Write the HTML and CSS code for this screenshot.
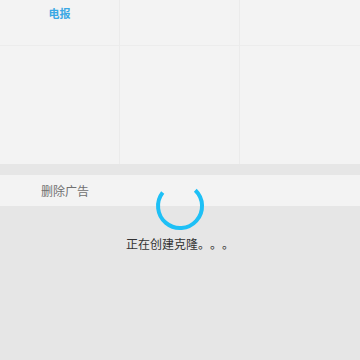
FILE: index.html
```html
<!DOCTYPE html>
<html lang="zh-CN">
  <head>
    <meta charset="UTF-8" />
    <meta name="viewport" content="width=device-width, initial-scale=1.0" />
    <title>克隆</title>
    <link rel="stylesheet" href="styles.css">
  </head>
  <body>
    <div class="page">
      <div class="grid">
        <div class="cell">
          <span class="label">电报</span>
        </div>
        <div class="cell"></div>
        <div class="cell"></div>
      </div>
      <div class="band"></div>
      <div class="row">删除广告</div>
      <div class="rest"></div>

      <div class="loading">
        <svg class="spinner" width="52" height="52" viewBox="0 0 52 52">
          <path d="M8.7 12.5 A22 22 0 1 0 41.3 10.2" fill="none" stroke="#1ec0f6" stroke-width="4" />
        </svg>
        <div class="msg">正在创建克隆。。。</div>
      </div>
    </div>
  </body>
</html>
```

FILE: styles.css
```css
* {
  margin: 0px;
  padding: 0px;
  box-sizing: border-box;
}
body {
  font-family: "Noto Sans CJK SC", "Noto Sans", sans-serif;
  background-color: #e6e6e6;
  text-spacing-trim: space-all;
}
.page {
  position: relative;
  width: 360px;
  height: 360px;
  overflow: hidden;
}
.grid {
  display: grid;
  grid-template-columns: 120px 120px 120px;
  height: 164px;
  background-color: #f3f3f3;
  background-image: linear-gradient(#ececec, #ececec);
  background-size: 100% 1px;
  background-position: 0 45px;
  background-repeat: no-repeat;
}
.cell {
  border-right: 1px solid #ebebeb;
  display: flex;
  justify-content: center;
  padding-top: 4px;
}
.cell:last-child {
  border-right: none;
}
.label {
  color: #3aa8e4;
  font-size: 11px;
  font-weight: bold;
  line-height: 18px;
}
.band {
  height: 11px;
  background-color: #e6e6e6;
}
.row {
  height: 31px;
  background-color: #f3f3f3;
  color: #707070;
  font-size: 12px;
  line-height: 31px;
  padding-left: 41px;
}
.loading {
  position: absolute;
  left: 0;
  right: 0;
  top: 180px;
  display: flex;
  flex-direction: column;
  align-items: center;
}
.spinner {
  display: block;
}
.msg {
  margin-top: 2px;
  color: #333333;
  font-size: 12px;
  line-height: 20px;
}
```
